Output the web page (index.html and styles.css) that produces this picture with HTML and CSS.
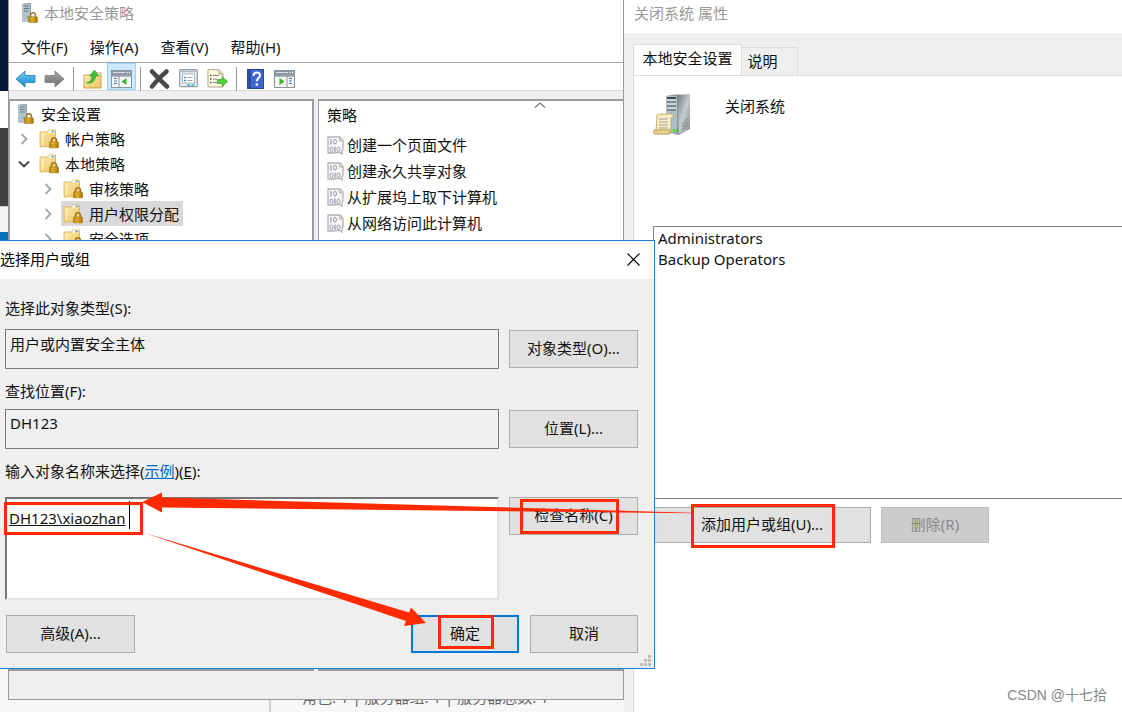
FILE: index.html
```html
<!DOCTYPE html>
<html lang="zh-CN">
<head>
<meta charset="utf-8">
<title>本地安全策略</title>
<link rel="stylesheet" href="styles.css">
</head>
<body>
<svg class="defs" aria-hidden="true">
  <defs>
    <linearGradient id="gFolder" x1="0" y1="0" x2="1" y2="1"><stop offset="0" stop-color="#fdeeb4"/><stop offset="1" stop-color="#eec35e"/></linearGradient>
    <linearGradient id="gLock" x1="0" y1="0" x2="1" y2="0"><stop offset="0" stop-color="#b8860e"/><stop offset=".4" stop-color="#e9bd38"/><stop offset="1" stop-color="#a87508"/></linearGradient>
    <linearGradient id="gBlue" x1="0" y1="0" x2="0" y2="1"><stop offset="0" stop-color="#6fcdf8"/><stop offset="1" stop-color="#1686d3"/></linearGradient>
    <linearGradient id="gGray" x1="0" y1="0" x2="0" y2="1"><stop offset="0" stop-color="#a9a9a9"/><stop offset="1" stop-color="#6c6c6c"/></linearGradient>
    <linearGradient id="gSteel" x1="0" y1="0" x2="1" y2="1"><stop offset="0" stop-color="#6f7a7d"/><stop offset=".5" stop-color="#c4cbcd"/><stop offset="1" stop-color="#858d90"/></linearGradient>
    <symbol id="lock" viewBox="0 0 10 12">
      <path d="M2.500 6V4a2.500 2.700 0 0 1 5 0v2" fill="none" stroke="#a37a22" stroke-width="1.600"/>
      <rect x=".4" y="5.500" width="9.200" height="6.100" rx=".8" fill="url(#gLock)" stroke="#9c7010" stroke-width=".6"/>
      <path d="M1 8h8M1 10h8" stroke="#a9790f" stroke-width=".5"/>
    </symbol>
    <symbol id="server-lock" viewBox="0 0 17 20">
      <path d="M1 1l3-1h6v19H1z" fill="#9fb0ba"/><path d="M1 1.500h8V19H1z" fill="#b4c2ca"/>
      <path d="M3 3h5M3 5.500h5M3 8h5" stroke="#647d8b" stroke-width="1.100"/><path d="M9.500 0v19" stroke="#8fa0aa"/>
      <path d="M6 14h2" stroke="#4ca64c"/>
      <use href="#lock" x="7" y="8.500" width="10" height="11.500"/>
    </symbol>
    <symbol id="folder-lock" viewBox="0 0 20 20">
      <path d="M1 3h7l2-2h6.500v16L1 18z" fill="url(#gFolder)" stroke="#d6ad55" stroke-width=".8"/>
      <path d="M9.500 2.500h6" stroke="#fff" stroke-width="2"/><path d="M12.500 2.500h2.500" stroke="#4b9cd3" stroke-width="1.300"/>
      <path d="M3.500 5v11" stroke="#fff2c6"/>
      <use href="#lock" x="10" y="7.500" width="10" height="12"/>
    </symbol>
    <symbol id="arrow" viewBox="0 0 21 18"><path d="M1 9l9-8v4.500h10v7H10V17z"/></symbol>
    <symbol id="chev" viewBox="0 0 8 12"><path d="M1.500 1l5 5-5 5" fill="none" stroke="#a5a5a5" stroke-width="1.800"/></symbol>
    <symbol id="chev-open" viewBox="0 0 12 8"><path d="M1 1.500l5 5 5-5" fill="none" stroke="#404040" stroke-width="1.800"/></symbol>
    <symbol id="policy" viewBox="0 0 17 19">
      <path d="M1 1h12l3 3v9c0 2-2 1-1 5-3-3-6-1-8-1H1z" fill="#f7f7f7" stroke="#b3b3b3" stroke-width="1.300"/><path d="M12.500 1v4H16" fill="#ddd" stroke="#b3b3b3"/>
      <path d="M4 3v5.500M8 10.500V16" stroke="#9a9aae" stroke-width="1.200"/>
      <ellipse cx="8" cy="5.700" rx="1.500" ry="2.300" fill="none" stroke="#9a9aae"/>
      <ellipse cx="4.500" cy="13.300" rx="1.500" ry="2.300" fill="none" stroke="#9a9aae"/>
      <ellipse cx="11.500" cy="13.300" rx="1.500" ry="2.300" fill="none" stroke="#9a9aae"/>
    </symbol>
    <symbol id="pane" viewBox="0 0 21 18">
      <rect x=".5" y=".5" width="20" height="17" fill="#f4f6f8" stroke="#8b959e"/><path d="M1 1h19v4.500H1z" fill="#8a98a5"/>
      <path d="M2 2.500h12" stroke="#d8dfe5"/><path d="M15.500 2.500h1M18 2.500h1" stroke="#fff" stroke-width="1.500"/><path d="M1 6h19" stroke="#6d7a86"/>
    </symbol>
  </defs>
</svg>

<main class="desktop">
  <div class="edge" aria-hidden="true">
    <i class="edge-navy"></i><i class="edge-white"></i><i class="edge-dark"></i><i class="edge-light"></i><i class="edge-blue"></i>
  </div>

  <section class="server-manager">
    <div class="server-nav"></div>
    <p class="server-summary">角色: 1 | 服务器组: 1 | 服务器总数: 1</p>
  </section>

  <section class="policy-window">
    <header class="policy-title"><svg width="17" height="20"><use href="#server-lock"/></svg><h1>本地安全策略</h1></header>
    <nav class="menu">
      <button>文件(F)</button><button>操作(A)</button><button>查看(V)</button><button>帮助(H)</button>
    </nav>
    <div class="toolbar">
      <button aria-label="后退"><svg width="21" height="18" fill="url(#gBlue)" stroke="#3b8dc4"><use href="#arrow"/></svg></button>
      <button aria-label="前进"><svg width="21" height="18" fill="url(#gGray)" stroke="#8a8a8a"><g transform="matrix(-1 0 0 1 21 0)"><use href="#arrow"/></g></svg></button>
      <i class="sep"></i>
      <button aria-label="上一级"><svg width="19" height="20" viewBox="0 0 19 20"><path d="M1 6h8l2-2h7v15H1z" fill="url(#gFolder)" stroke="#c9a34c"/><path d="M12 5h5" stroke="#fff"/><path d="M3.500 14c4-1 5.500-4 5.500-7H6.500l5-6 4.500 6h-3.500c0 5-4 8-9 7z" fill="#43bd35" stroke="#2f9d28" stroke-width=".6"/></svg></button>
      <button class="on" aria-label="显示控制台树"><svg width="21" height="18"><use href="#pane"/><path d="M3 8.500h3M3 11h3M3 13.500h3" stroke="#3c77b5" stroke-width="1.200"/><path d="M8 6v11" stroke="#8b959e"/><path d="M15.500 8v7L10.500 11.500z" fill="#43b02a"/></svg></button>
      <i class="sep"></i>
      <button aria-label="删除"><svg width="21" height="20" viewBox="0 0 21 20"><path d="M3 2.500c4 4 9 9.500 15 15M17.500 2.500C12 7 7 12 3 17.500" fill="none" stroke="#484848" stroke-width="4.500" stroke-linecap="round"/></svg></button>
      <button aria-label="属性"><svg width="19" height="19" viewBox="0 0 19 19"><rect x=".7" y=".7" width="17.600" height="17" rx="1" fill="#e9edf0" stroke="#939ca4" stroke-width="1.200"/><path d="M2 2.500h15" stroke="#adb8c0" stroke-width="1.500"/><rect x="3.500" y="5" width="12" height="9" fill="#fff" stroke="#aab6c1"/><path d="M5 8.500h2M5 11.500h2" stroke="#4b91cc" stroke-width="1.300"/><path d="M8.500 8.500h5M8.500 11.500h5" stroke="#98a4af"/><path d="M8 16h3M12.500 16h3" stroke="#34aede" stroke-width="1.500"/></svg></button>
      <button aria-label="导出列表"><svg width="21" height="19" viewBox="0 0 21 19"><path d="M1 .7h11l4 4V18H1z" fill="#fffbe3" stroke="#aaa58a"/><path d="M12 .7V5h4" fill="#eee4b4" stroke="#aaa58a"/><path d="M3 6.500h1.500M3 10h1.500M3 13.500h1.500" stroke="#444" stroke-width="1.400"/><path d="M6 6.500h6M6 10h4M6 13.500h4" stroke="#7a7aa0"/><path d="M10.500 10.500H15V7.500l5.500 5-5.500 5v-3h-4.500z" fill="#55cc3a" stroke="#36a127" stroke-width=".7"/></svg></button>
      <i class="sep"></i>
      <button aria-label="帮助"><svg width="17" height="20" viewBox="0 0 17 20"><rect x=".5" y=".5" width="16" height="19" fill="#3e66cf" stroke="#2747a0"/><path d="M2.500 1v18" stroke="#223f98" stroke-width="2"/><path d="M6.500 7c0-4.500 6.500-4.500 6.500-.800 0 2.700-3.200 2.800-3.200 6" fill="none" stroke="#fff" stroke-width="2"/><circle cx="9.800" cy="15.500" r="1.300" fill="#fff"/></svg></button>
      <button aria-label="显示操作窗格"><svg width="21" height="18"><use href="#pane"/><path d="M15 8.500h3M15 11h3M15 13.500h3" stroke="#3c77b5" stroke-width="1.200"/><path d="M13 6v11" stroke="#8b959e"/><path d="M5.500 8v7l5-3.500z" fill="#43b02a"/></svg></button>
    </div>
    <div class="panes">
      <ul class="tree">
        <li class="node root"><svg width="17" height="20"><use href="#server-lock"/></svg><span>安全设置</span></li>
        <li class="node"><svg class="twist" width="12" height="12"><use href="#chev"/></svg><span class="item"><svg width="20" height="20"><use href="#folder-lock"/></svg>帐户策略</span></li>
        <li class="node"><svg class="twist" width="12" height="8"><use href="#chev-open"/></svg><span class="item"><svg width="20" height="20"><use href="#folder-lock"/></svg>本地策略</span></li>
        <li class="node child"><svg class="twist" width="12" height="12"><use href="#chev"/></svg><span class="item"><svg width="20" height="20"><use href="#folder-lock"/></svg>审核策略</span></li>
        <li class="node child"><svg class="twist" width="12" height="12"><use href="#chev"/></svg><span class="item selected"><svg width="20" height="20"><use href="#folder-lock"/></svg>用户权限分配</span></li>
        <li class="node child"><svg class="twist" width="12" height="12"><use href="#chev"/></svg><span class="item"><svg width="20" height="20"><use href="#folder-lock"/></svg>安全选项</span></li>
      </ul>
      <div class="policies">
        <table>
          <thead><tr><th>策略<svg class="sort" width="12" height="6"><path d="M1 5.500l5-4.500 5 4.500" fill="none" stroke="#777" stroke-width="1.200"/></svg></th></tr></thead>
          <tbody>
            <tr><td><svg width="17" height="19"><use href="#policy"/></svg>创建一个页面文件</td></tr>
            <tr><td><svg width="17" height="19"><use href="#policy"/></svg>创建永久共享对象</td></tr>
            <tr><td><svg width="17" height="19"><use href="#policy"/></svg>从扩展坞上取下计算机</td></tr>
            <tr><td><svg width="17" height="19"><use href="#policy"/></svg>从网络访问此计算机</td></tr>
          </tbody>
        </table>
      </div>
    </div>
    <footer class="status"></footer>
  </section>

  <section class="props-window">
    <header class="props-title"><h2>关闭系统 属性</h2></header>
    <div class="tabs"><button class="tab active">本地安全设置</button><button class="tab">说明</button></div>
    <div class="props-page">
      <div class="props-head">
        <svg width="38" height="42" viewBox="0 0 38 42">
          <path d="M13 2l9-1.500h15v34L26 41 13 38z" fill="#8b9598"/><path d="M24 1h13v34L26 40z" fill="url(#gSteel)"/><path d="M13 2h11v37l-11-1z" fill="#afbec4"/>
          <path d="M14 4h9" stroke="#3c484d" stroke-width="2"/><path d="M14 8h9M14 12h9M14 16h9" stroke="#67777f" stroke-width="1.500"/><path d="M14 6h9M14 10h9M14 14h9" stroke="#e2e9ec"/>
          <path d="M29 33l6-5M29 36l6-5M29 30l6-5" stroke="#7b8588"/>
          <rect x="20" y="35" width="4" height="3" fill="#5bdb22"/>
          <path d="M4 21c1-1 3-1 14-1 3 0 3 4 0 4v14H3z" fill="#faedc2" stroke="#c6ac6c"/><path d="M1 36h16v4H2c-2 0-2-4 0-4z" fill="#ecd58f" stroke="#b99c55"/>
          <path d="M6 25h9M6 28h9M6 31h9M6 34h9" stroke="#9a98a5"/>
        </svg>
        <span>关闭系统</span>
      </div>
      <ul class="members"><li>Administrators</li><li>Backup Operators</li></ul>
      <div class="props-actions"><button class="btn add">添加用户或组(U)...</button><button class="btn remove" disabled>删除(R)</button></div>
    </div>
  </section>

  <section class="dialog" role="dialog" aria-labelledby="dlg-title">
    <header class="dialog-title"><h2 id="dlg-title">选择用户或组</h2><button class="close" aria-label="关闭"><svg width="13" height="13"><path d="M.5.5l12 12M12.500.5l-12 12" stroke="#000" stroke-width="1.100"/></svg></button></header>
    <form class="dialog-body">
      <label for="type">选择此对象类型(S):</label>
      <div class="row"><input id="type" readonly value="用户或内置安全主体"><button type="button" class="btn">对象类型(O)...</button></div>
      <label class="place-label" for="place">查找位置(F):</label>
      <div class="row"><input id="place" readonly value="DH123"><button type="button" class="btn">位置(L)...</button></div>
      <label class="names-label" for="names">输入对象名称来选择(<a href="#names">示例</a>)(<u>E</u>):</label>
      <div class="row names-row"><textarea id="names" spellcheck="false">DH123\xiaozhan</textarea><button type="button" class="btn">检查名称(C)</button></div>
      <div class="dialog-actions"><button type="button" class="btn advanced">高级(A)...</button><button type="button" class="btn ok">确定</button><button type="button" class="btn">取消</button></div>
    </form>
    <svg class="grip" width="11" height="11" fill="#bcbcbc"><path d="M8 0h3v3H8zM4 4h3v3H4zM8 4h3v3H8zM0 8h3v3H0zM4 8h3v3H4zM8 8h3v3H8z"/></svg>
  </section>

  <p class="credit">CSDN @十七拾</p>

  <svg class="marks" aria-hidden="true">
    <path d="M129.500 501v28" stroke="#000"/>
    <g fill="none" stroke="#ff2a00" stroke-width="3">
      <rect x="5.500" y="503.500" width="136" height="30"/>
      <rect x="521.500" y="500.500" width="96" height="32"/>
      <rect x="692.500" y="505.500" width="141" height="41"/>
      <rect x="439.500" y="616.500" width="53" height="31"/>
    </g>
    <g fill="#ff2a00">
      <path d="M692 513.300L162 507.500V512.500L142 502 162 492.500V497.500L692 512.700z"/>
      <path d="M143 532.500L409 612.500 411 607.500 426 623 404 626 406 621z"/>
    </g>
  </svg>
</main>
</body>
</html>
```
FILE: styles.css
```css
* { box-sizing: border-box; }
body {
  margin: 0;
  font: 15px/20px "Noto Sans", "Noto Sans CJK SC", sans-serif;
  color: #111;
}
h1, h2, p, ul { margin: 0; padding: 0; font-size: 15px; font-weight: 400; list-style: none; }
button, input, textarea { font: inherit; color: inherit; margin: 0; border-radius: 0; }
button { border: 0; padding: 0; background: none; }
svg { flex: none; display: block; }
.defs { position: absolute; width: 0; height: 0; }

.desktop { position: relative; min-height: 100vh; overflow: hidden; background: #f7f7f7; }

.edge { position: absolute; left: 0; top: 0; width: 9px; display: flex; flex-direction: column; }
.edge-navy { height: 91px; background: #051a35; }
.edge-white { height: 37px; background: #fff; }
.edge-dark { height: 78px; background: #404040; }
.edge-light { height: 26px; background: #f5f5f5; border-top: 1px solid #ccc; }
.edge-blue { height: 10px; background: #0873bd; }

.server-manager { position: absolute; left: 0; top: 669px; right: 0; bottom: 0; display: flex; }
.server-nav { width: 271px; border-right: 2px solid #d0d0d0; }
.server-summary { padding: 18px 0 0 31px; color: #666; }

.policy-window {
  position: absolute; left: 8px; top: 0; width: 616px; height: 700px;
  display: flex; flex-direction: column;
  background: #efefef; border: 1px solid #999; border-top: 0;
}
.policy-title { display: flex; align-items: center; gap: 6px; height: 34px; padding: 0 0 8px 12px; background: #fff; color: #999; }
.menu { display: flex; gap: 22px; height: 29px; padding: 0 12px 2px; background: #fff; border-bottom: 1px solid #aaa; }
.toolbar { display: flex; height: 28px; padding-left: 2px; background: #fff; border-bottom: 1px solid #d8d8d8; }
.toolbar button { width: 29px; display: flex; align-items: center; justify-content: center; padding-top: 4px; }
.toolbar .on { background: #cce8ff; border: 1px solid #99d1ff; }
.sep { width: 9px; height: 24px; margin-top: 4px; background: linear-gradient(#999, #999) center / 1px 100% no-repeat; }
.panes { flex: 1; display: grid; grid-template-columns: 305px 1fr; gap: 4px; padding-top: 8px; }
.tree, .policies { background: #fff; border: 2px solid #9a9ca4; border-left-width: 1px; }
.tree { padding: 0 7px; }
.policies { border-right: 0; }
.node { display: flex; align-items: center; height: 25px; }
.root { gap: 7px; }
.child { padding-left: 24px; }
.twist { margin: 0 7px 0 1px; }
.item { display: flex; align-items: center; gap: 6px; height: 25px; padding: 0 4px 0 2px; }
.selected { background: #d9d9d9; }
.policies table { width: 100%; border-collapse: collapse; }
.policies th { position: relative; height: 31px; padding: 0 8px 3px; text-align: left; font-weight: 400; }
.sort { position: absolute; left: 215px; top: 1px; }
.policies td { height: 26px; padding: 0 8px; }
.policies td svg { float: left; margin: 1px 3px 0 0; }
.status { height: 28px; }

.props-window { position: absolute; left: 624px; top: 0; right: 0; bottom: 0; display: flex; flex-direction: column; background: #efefef; }
.props-title { height: 33px; padding: 3px 10px; background: #fff; color: #999; }
.tabs { display: flex; align-items: flex-end; height: 42px; padding-left: 9px; }
.tab { width: 56px; height: 28px; padding: 0 14px 2px 0; border: 1px solid #dcdcdc; border-left: 0; border-bottom: 0; }
.tab.active { width: 109px; height: 31px; padding: 0 0 4px; border-left: 1px solid #dcdcdc; background: #fff; }
.props-page { flex: 1; margin-left: 9px; background: #fff; border-left: 1px solid #dcdcdc; border-top: 1px solid #dcdcdc; padding-left: 19px; }
.props-head { display: flex; gap: 34px; height: 150px; padding: 18px 0 0; }
.props-head span { padding-top: 2px; }
.members { height: 273px; padding: 1px 4px; border: 1px solid #828790; border-right: 0; }
.members li { height: 21px; }
.props-actions { display: flex; gap: 10px; padding-top: 8px; }
.btn { height: 38px; padding-bottom: 2px; background: #e1e1e1; border: 1px solid #adadad; }
.props-actions .btn { height: 36px; }
.add { width: 218px; }
.remove { width: 108px; background: #ccc; border-color: #bfbfbf; color: #888; }

.dialog { position: absolute; left: 0; top: 240px; width: 655px; background: #efefef; border: 1px solid #1a7fd4; border-left: 0; }
.dialog-title { display: flex; justify-content: space-between; align-items: center; height: 38px; padding: 0 14px 2px 0; background: #fff; color: #000; }
.dialog-body { padding: 19px 16px 15px 5px; }
.dialog-body label { display: block; margin-bottom: 11px; }
.row { display: grid; grid-template-columns: 1fr 129px; align-items: center; gap: 10px; margin-bottom: 12px; }
.row input { width: 100%; height: 40px; padding: 0 4px 12px; background: #efefef; border: 1px solid #7a7a7a; outline: 0; }
.dialog-body .place-label { margin-bottom: 8px; }
.dialog-body .names-label { margin-bottom: 16px; }
.names-row { align-items: start; margin-bottom: 15px; }
.row textarea {
  display: block; width: 100%; height: 103px; padding: 9px 2px; resize: none; outline: 0;
  background: #fff; border: 2px solid; border-color: #767676 #e3e3e3 #e3e3e3 #767676; text-decoration: underline;
}
.dialog a { color: #0066cc; }
.dialog-actions { display: flex; gap: 11px; padding-left: 1px; }
.dialog-actions .btn { width: 108px; }
.dialog-actions .advanced { width: 129px; margin-right: auto; }
.dialog-actions .ok { border: 2px solid #0078d7; }
.grip { position: absolute; right: 3px; bottom: 2px; }

.credit { position: absolute; right: 15px; bottom: 7px; font: 14px/20px "Liberation Sans", "Noto Sans CJK SC", sans-serif; color: #888; }
.marks { position: absolute; left: 0; top: 0; width: 100%; height: 100%; pointer-events: none; }
```
